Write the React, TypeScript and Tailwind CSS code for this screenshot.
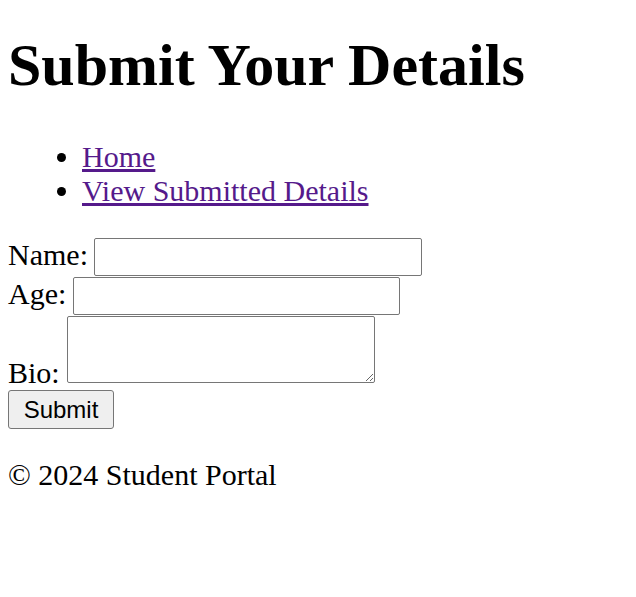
import React from 'react';

const serif = "font-['Liberation_Serif','Times_New_Roman',serif]";

export default function App() {
  return (
    <div className={`${serif} text-[30px] text-black bg-white px-[8px] min-h-[597px]`}>
      <h1 className="pt-[32px] text-[60px] font-bold leading-[66px]">Submit Your Details</h1>

      <ul className="mt-[42px] list-disc pl-[74px] leading-[34px]">
        <li>
          <a href="#" className="text-[#551a8b] underline">Home</a>
        </li>
        <li>
          <a href="#" className="text-[#551a8b] underline">View Submitted Details</a>
        </li>
      </ul>

      <form className="mt-[30px] flex flex-col items-start" onSubmit={(e) => e.preventDefault()}>
        <div className="flex items-end gap-[6px]">
          <label htmlFor="name" className="leading-[34px] pb-[4px]">Name:</label>
          <input id="name" type="text" className="w-[328px] h-[38px] border border-[#767676] rounded-[2px] bg-white px-[4px] text-[24px]" />
        </div>
        <div className="mt-[1px] flex items-end gap-[7px]">
          <label htmlFor="age" className="leading-[34px] pb-[4px]">Age:</label>
          <input id="age" type="number" className="w-[327px] h-[38px] border border-[#767676] rounded-[2px] bg-white px-[4px] text-[24px] [appearance:textfield]" />
        </div>
        <div className="mt-[1px] flex items-end gap-[7px]">
          <label htmlFor="bio" className="leading-[34px]">Bio:</label>
          <textarea id="bio" className="w-[308px] h-[67px] mb-[7px] border border-[#767676] rounded-[2px] bg-white text-[24px]" />
        </div>
        <button type="submit" className="w-[106px] h-[39px] bg-[#efefef] border border-[#767676] rounded-[3px] font-['Liberation_Sans',Arial,sans-serif] text-[24px] leading-[37px] text-black text-center">
          Submit
        </button>
      </form>

      <footer className="mt-[29px] leading-[34px]">
        <p>© 2024 Student Portal</p>
      </footer>
    </div>
  );
}
